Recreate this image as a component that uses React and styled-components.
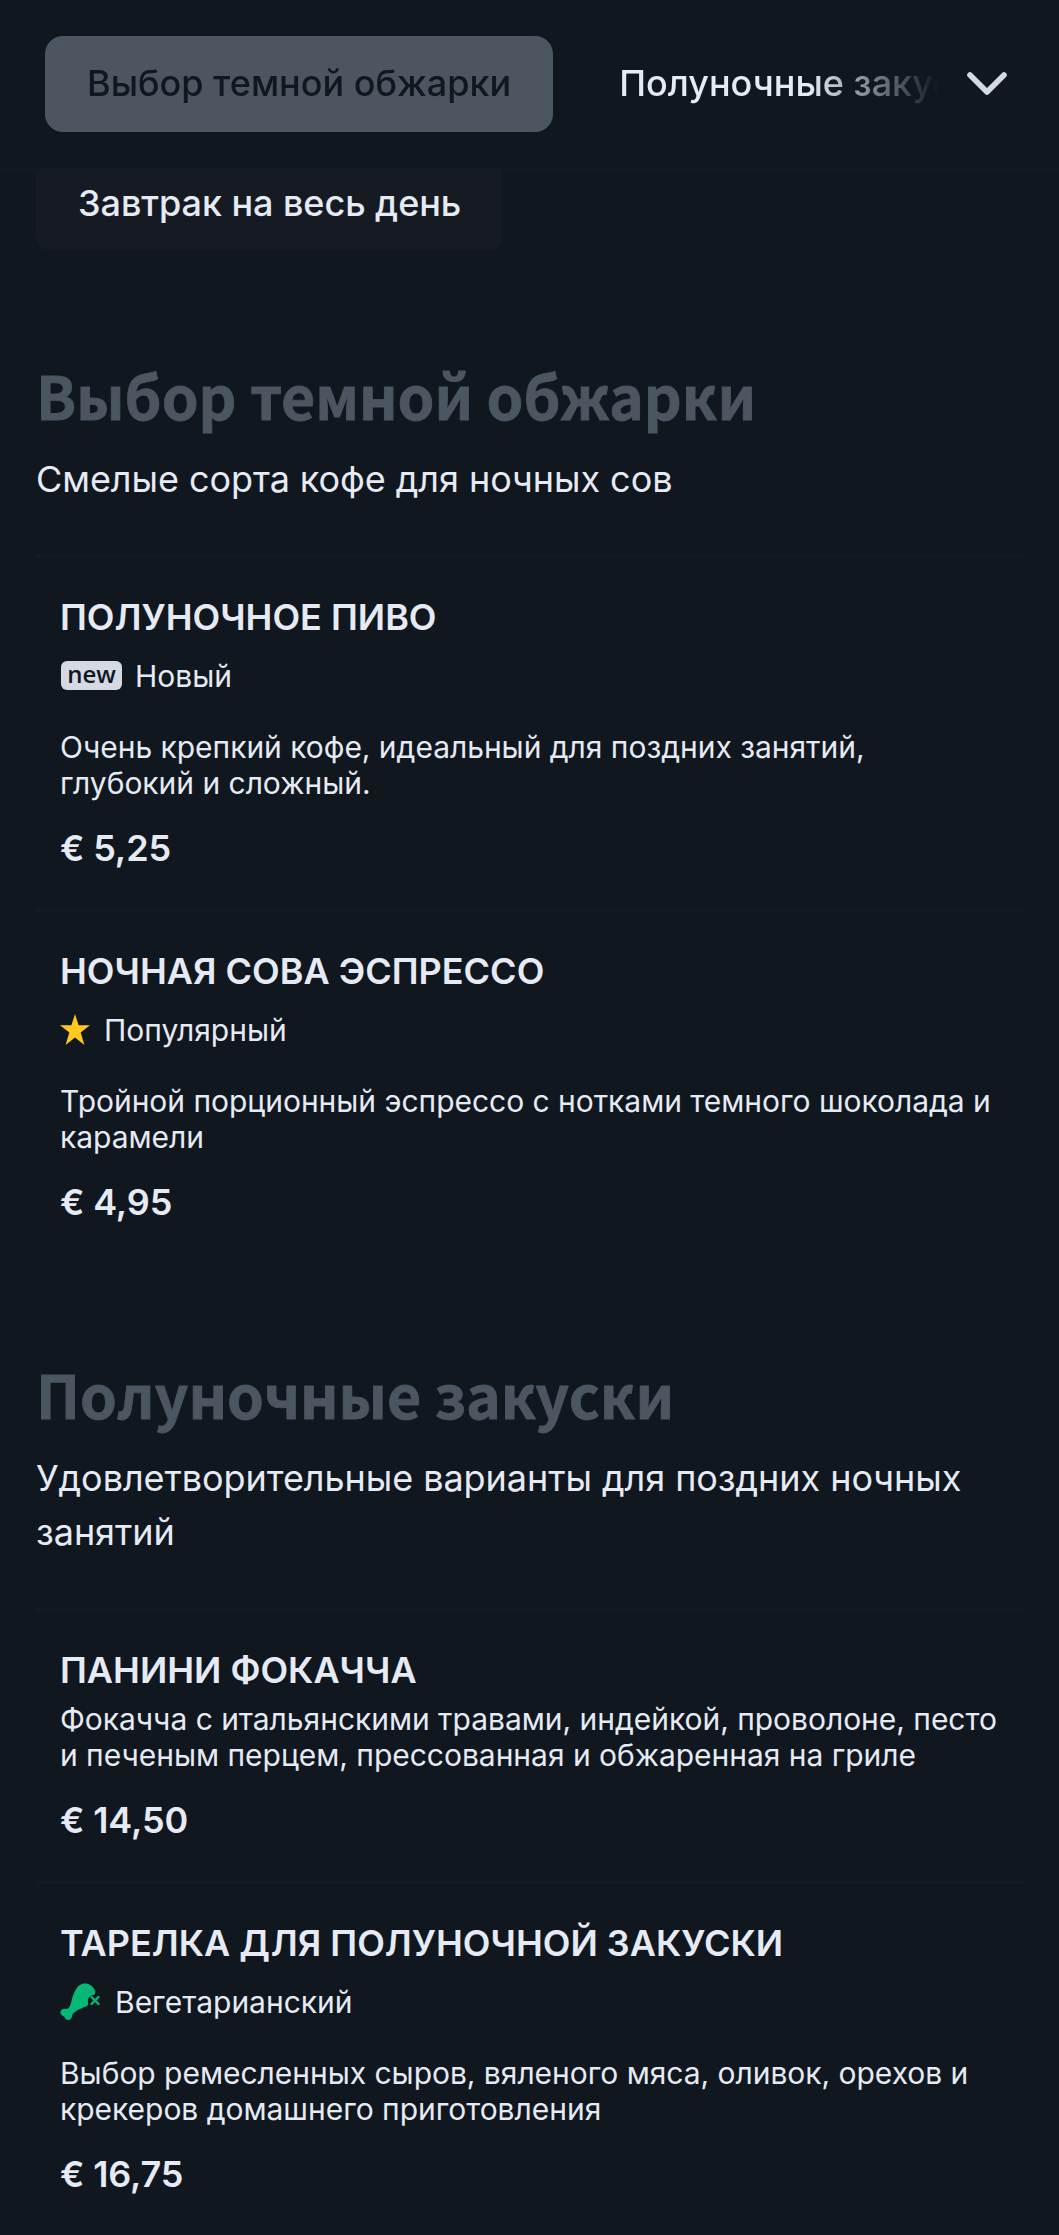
import React from "react";
import styled, { createGlobalStyle } from "styled-components";

const Global = createGlobalStyle`
  * { box-sizing: border-box; }
  html { overflow: hidden; }
  body {
    margin: 0;
    background: #10171e;
    color: #e5eaf4;
    font-family: Inter, "Liberation Sans", sans-serif;
    overflow: hidden;
  }
  h2, h3, p { margin: 0; font-weight: 400; }
`;

const Page = styled.div`
  width: 1059px;
  height: 2235px;
  overflow: hidden;
  display: flex;
  flex-direction: column;
`;

const NavBar = styled.nav`
  height: 171px;
  flex: none;
  display: flex;
  align-items: flex-start;
  padding: 36px 48px 0 45px;
  background: #10171e;
  border-bottom: 3px solid #131a21;
`;

const TabStrip = styled.div`
  width: 894px;
  flex: none;
  display: flex;
  gap: 24px;
  overflow: hidden;
  mask-image: linear-gradient(to right, #000 765px, transparent 894px);
`;

const Tab = styled.button`
  flex: none;
  height: 96px;
  padding: 0 42px 2px;
  border: 0;
  border-radius: 18px;
  background: ${(p) => (p.$active ? "#4b5661" : "transparent")};
  color: ${(p) => (p.$active ? "#10171e" : "#e5eaf4")};
  font: 500 36px/54px Inter, sans-serif;
  white-space: nowrap;
`;

const Expand = styled.button`
  flex: none;
  width: 54px;
  height: 96px;
  margin-left: 21px;
  padding: 0;
  border: 0;
  background: transparent;
  display: flex;
  align-items: center;
  justify-content: center;
`;

const Shelf = styled.div`
  height: 79px;
  flex: none;
  padding-left: 36px;
  display: flex;
  overflow: hidden;
  align-items: flex-end;
`;

const Chip = styled.div`
  height: 96px;
  padding: 0 42px;
  border-radius: 12px;
  background: #161a23;
  font-size: 36px;
  font-weight: 500;
  line-height: 98px;
  letter-spacing: -0.06px;
  white-space: nowrap;
`;

const Section = styled.section`
  padding: ${(p) => p.$top}px 36px 0;
`;

const Heading = styled.h2`
  font: 700 59px/90px "Noto Sans CJK SC", sans-serif;
  letter-spacing: -0.03px;
  color: #4b5661;
  -webkit-text-stroke: 0.8px #4b5661;
  white-space: nowrap;
`;

const Tagline = styled.p`
  margin-top: 12px;
  font-size: 36px;
  line-height: 54px;
  letter-spacing: -0.06px;
  margin-bottom: 49px;
`;

const Item = styled.article`
  border-top: 3px solid #131a21;
  padding: 32px 24px 34.3px;
`;

const Title = styled.h3`
  font-size: 36px;
  font-weight: 600;
  line-height: 54px;
  white-space: nowrap;
  text-transform: uppercase;
`;

const TagRow = styled.div`
  height: 36px;
  margin: 14px 0 31.5px;
  display: flex;
  align-items: center;
  gap: ${(p) => p.$gap}px;
  font-size: 30px;
  line-height: 36px;
`;

const NewBadge = styled.span`
  width: 61px;
  height: 29px;
  margin-left: 1px;
  border-radius: 6px;
  background: #d5d9e3;
  color: #10171e;
  font: 600 24px/25px "Open Sans", sans-serif;
  text-align: center;
`;

const Description = styled.p`
  padding-top: 3.5px;
  font-size: 30px;
  line-height: 36.2px;
  letter-spacing: -0.03px;
`;

const Price = styled.div`
  margin-top: 19.6px;
  font-size: 36px;
  font-weight: 600;
  line-height: 54px;
  letter-spacing: -0.15px;
`;

const Chevron = () => (
  <svg width="44" height="28" viewBox="0 0 44 28" fill="none">
    <path d="M5 5 L22 22 L39 5" stroke="#d5d9e3" strokeWidth="5.6" strokeLinecap="round" strokeLinejoin="round" />
  </svg>
);

const Star = () => (
  <svg width="30" height="31" viewBox="0 0 30 31">
    <path d="M15 0 L18.6 11.2 H30 L20.7 18.4 L24.4 31 L15 23.4 L5.6 31 L9.3 18.4 L0 11.2 H11.4 Z" fill="#ffc81e" />
  </svg>
);

const Drumstick = () => (
  <svg width="40" height="38" viewBox="0 0 40 38">
    <path
      d="M22 1 C27 -0.500 33 2 35 8 C35.500 10 35 11 34 12 C30 12 27.500 15 28 19 C28.500 21 28 22 27 23 C23 25 18 26 15 29 C13.500 30.500 12 31 12 33 C12 36 9 38 6.500 36.500 C5.500 36 5 35 4.600 34 C2 33 0 31 0.500 29 C1 26 4 25 6 26 C9 26 10 23 11 20 C12 16 13 11 15.500 7 C17 4 19 2 22 1 Z"
      fill="#06b877"
    />
    <path d="M31.500 14 L38.500 21 M38.500 14 L31.500 21" stroke="#06b877" strokeWidth="2.400" strokeLinecap="round" />
  </svg>
);

const tags = {
  new: { icon: <NewBadge>new</NewBadge>, label: "Новый", gap: 13 },
  popular: { icon: <Star />, label: "Популярный", gap: 14 },
  vegetarian: { icon: <Drumstick />, label: "Вегетарианский", gap: 15 },
};

const menu = [
  {
    title: "Выбор темной обжарки",
    tagline: "Смелые сорта кофе для ночных сов",
    top: 99.5,
    items: [
      {
        title: "Полуночное пиво",
        tag: "new",
        text: "Очень крепкий кофе, идеальный для поздних занятий, глубокий и сложный.",
        price: "€ 5,25",
      },
      {
        title: "Ночная сова эспрессо",
        tag: "popular",
        text: "Тройной порционный эспрессо с нотками темного шоколада и карамели",
        price: "€ 4,95",
      },
    ],
  },
  {
    title: "Полуночные закуски",
    tagline: "Удовлетворительные варианты для поздних ночных занятий",
    top: 86,
    items: [
      {
        title: "Панини Фокачча",
        text: "Фокачча с итальянскими травами, индейкой, проволоне, песто и печеным перцем, прессованная и обжаренная на гриле",
        price: "€ 14,50",
      },
      {
        title: "Тарелка для полуночной закуски",
        tag: "vegetarian",
        text: "Выбор ремесленных сыров, вяленого мяса, оливок, орехов и крекеров домашнего приготовления",
        price: "€ 16,75",
      },
    ],
  },
];

const MenuItem = ({ title, tag, text, price }) => (
  <Item>
    <Title>{title}</Title>
    {tag && (
      <TagRow $gap={tags[tag].gap}>
        {tags[tag].icon}
        <span>{tags[tag].label}</span>
      </TagRow>
    )}
    <Description>{text}</Description>
    <Price>{price}</Price>
  </Item>
);

export default function App() {
  return (
    <Page>
      <Global />
      <NavBar>
        <TabStrip>
          <Tab $active>Выбор темной обжарки</Tab>
          <Tab>Полуночные закуски</Tab>
        </TabStrip>
        <Expand aria-label="Все разделы">
          <Chevron />
        </Expand>
      </NavBar>
      <Shelf>
        <Chip>Завтрак на весь день</Chip>
      </Shelf>
      {menu.map((s) => (
        <Section key={s.title} $top={s.top}>
          <Heading>{s.title}</Heading>
          <Tagline>{s.tagline}</Tagline>
          {s.items.map((i) => (
            <MenuItem key={i.title} {...i} />
          ))}
        </Section>
      ))}
    </Page>
  );
}
